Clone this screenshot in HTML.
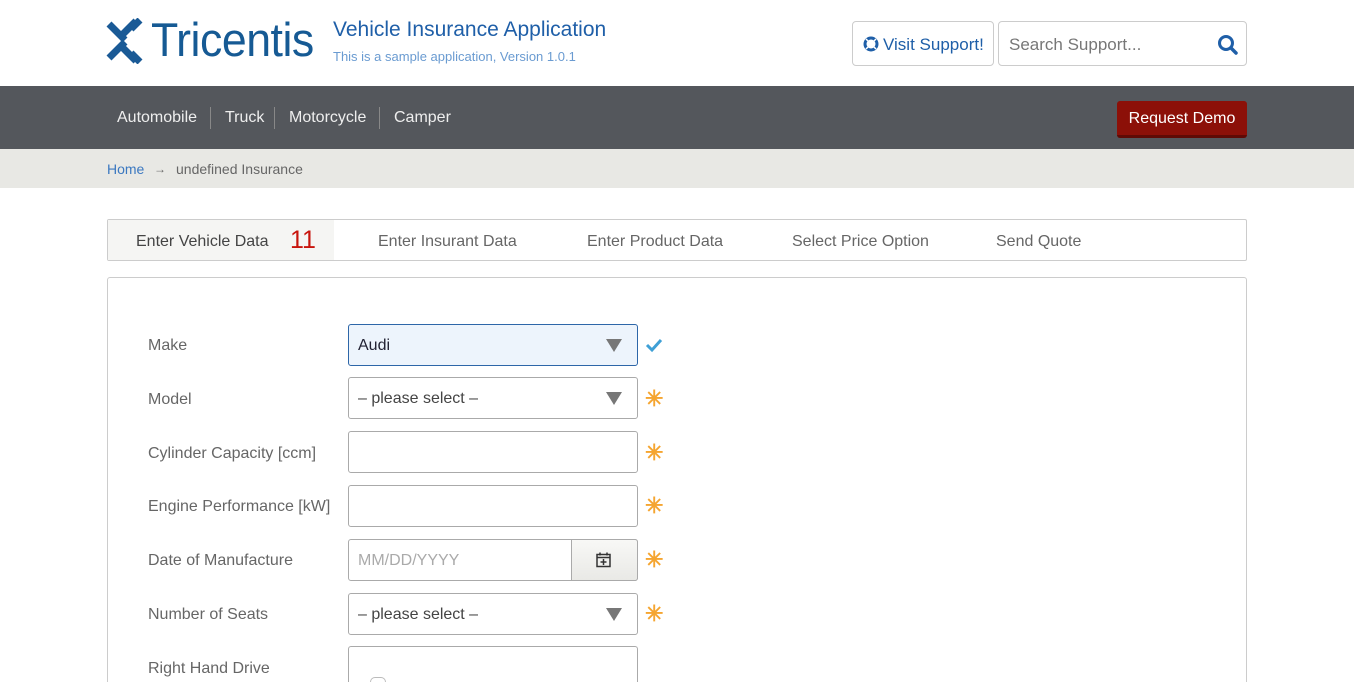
<!DOCTYPE html>
<html><head><meta charset="utf-8"><style>
*{box-sizing:border-box;margin:0;padding:0}
html{width:1366px;height:682px;overflow:hidden}
body{width:1366px;height:682px;overflow:hidden;background:#fff;font-family:"Liberation Sans",sans-serif;color:#555;position:relative}
.abs{position:absolute}
.hdr{left:0;top:0;width:1354px;height:86px;background:#fff}
.nav{left:0;top:86px;width:1354px;height:63px;background:#54575c}
.bc{left:0;top:149px;width:1354px;height:39px;background:#e8e8e4}
.navi{color:#eee;font-size:16px;top:109px}
.sep{top:107px;width:1px;height:22px;background:#888}
.btn{border:1px solid #ccc;border-radius:4px;background:#fff}
.tabs{left:107px;top:219px;width:1140px;height:42px;border:1px solid #ccc;border-radius:2px}
.tab{top:233px;font-size:16px;color:#666}
.form{left:107px;top:277px;width:1140px;height:420px;border:1px solid #ccc;border-radius:3px}
.lbl{left:148px;font-size:16px;color:#666}
.inp{left:348px;width:290px;height:42px;border:1px solid #aaa;border-radius:3px;background:#fff;font-size:16px;color:#444;padding:12px 9px}
.arr{position:absolute;right:15px;top:14px;width:0;height:0;border-left:8px solid transparent;border-right:8px solid transparent;border-top:13px solid #777}
.star{left:645px;font-size:22px;color:#f5a530;font-weight:bold;line-height:1}
</style></head><body>
<div class="abs hdr"></div>
<svg class="abs" style="left:106px;top:18px" width="40" height="46" viewBox="0 0 40 46">
<g stroke="#1a5a96" stroke-width="7" fill="none">
<path d="M3 6 L19 22"/><path d="M3 40 L19 24"/>
<path d="M34 2 L25 11"/><path d="M34 44 L25 35"/>
<path d="M17 30 L30 43" /><path d="M17 16 L30 3"/>
</g></svg>
<div class="abs" style="left:151px;top:12px;font-size:47px;color:#165a94;letter-spacing:-0.5px;transform:scaleX(0.95);transform-origin:left">Tricentis</div>
<div class="abs" style="left:333px;top:18px;font-size:21px;color:#1f5fa8">Vehicle Insurance Application</div>
<div class="abs" style="left:333px;top:49px;font-size:13px;color:#6a9bd1">This is a sample application, Version 1.0.1</div>
<div class="abs btn" style="left:852px;top:21px;width:142px;height:45px"></div>
<svg class="abs" style="left:863px;top:36px" width="16" height="16" viewBox="0 0 16 16"><circle cx="8" cy="8" r="6" fill="none" stroke="#1f5fa8" stroke-width="3"/><circle cx="8" cy="8" r="2.5" fill="#fff"/><path d="M3 3l3 3M13 3l-3 3M3 13l3-3M13 13l-3-3" stroke="#fff" stroke-width="1.5"/></svg>
<div class="abs" style="left:883px;top:35px;font-size:17px;color:#1f5fa8">Visit Support!</div>
<div class="abs btn" style="left:998px;top:21px;width:249px;height:45px"></div>
<div class="abs" style="left:1009px;top:35px;font-size:17px;color:#777">Search Support...</div>
<svg class="abs" style="left:1217px;top:34px" width="22" height="22" viewBox="0 0 22 22"><circle cx="9" cy="9" r="6.5" fill="none" stroke="#1f5fa8" stroke-width="3"/><path d="M14 14l5 5" stroke="#1f5fa8" stroke-width="3.5" stroke-linecap="round"/></svg>
<div class="abs nav"></div>
<div class="abs navi" style="left:117px">Automobile</div>
<div class="abs sep" style="left:210px"></div>
<div class="abs navi" style="left:225px">Truck</div>
<div class="abs sep" style="left:274px"></div>
<div class="abs navi" style="left:289px">Motorcycle</div>
<div class="abs sep" style="left:379px"></div>
<div class="abs navi" style="left:394px">Camper</div>
<div class="abs" style="left:1117px;top:101px;width:130px;height:37px;background:#8c1008;border-radius:3px;border-bottom:3px solid #5f0a05;color:#fff;font-size:16px;text-align:center;line-height:36px">Request Demo</div>
<div class="abs bc"></div>
<div class="abs" style="left:107px;top:161px;font-size:14px;color:#3b78c0">Home</div>
<div class="abs" style="left:154px;top:162px;font-size:12px;color:#666">→</div>
<div class="abs" style="left:176px;top:161px;font-size:14px;color:#666">undefined Insurance</div>
<div class="abs tabs"></div>
<div class="abs" style="left:108px;top:220px;width:226px;height:40px;background:#f5f5f3"></div>
<div class="abs tab" style="left:136px;color:#444">Enter Vehicle Data</div>
<div class="abs" style="left:290px;top:226px;font-size:25px;color:#c8140c">11</div>
<div class="abs tab" style="left:378px">Enter Insurant Data</div>
<div class="abs tab" style="left:587px">Enter Product Data</div>
<div class="abs tab" style="left:792px">Select Price Option</div>
<div class="abs tab" style="left:996px">Send Quote</div>
<div class="abs form"></div>

<div class="abs lbl" style="top:337px">Make</div>
<div class="abs inp" style="top:324px;background:#edf4fc;border-color:#2d66a8;color:#223">Audi<div class="arr"></div></div>
<svg class="abs" style="left:645px;top:337px" width="18" height="16" viewBox="0 0 18 16"><path d="M2 8l5 5L16 3" fill="none" stroke="#3fa0d6" stroke-width="3"/></svg>

<div class="abs lbl" style="top:391px">Model</div>
<div class="abs inp" style="top:377px">– please select –<div class="arr"></div></div>
<div class="abs star" style="top:388px">✳</div>

<div class="abs lbl" style="top:445px">Cylinder Capacity [ccm]</div>
<div class="abs inp" style="top:431px"></div>
<div class="abs star" style="top:442px">✳</div>

<div class="abs lbl" style="top:498px">Engine Performance [kW]</div>
<div class="abs inp" style="top:485px"></div>
<div class="abs star" style="top:495px">✳</div>

<div class="abs lbl" style="top:552px">Date of Manufacture</div>
<div class="abs inp" style="top:539px;color:#aaa">MM/DD/YYYY</div>
<div class="abs" style="left:571px;top:539px;width:67px;height:42px;border:1px solid #aaa;border-radius:0 3px 3px 0;background:linear-gradient(#f8f8f6,#e9e9e6)"></div>
<svg class="abs" style="left:595px;top:551px" width="18" height="18" viewBox="0 0 18 18"><rect x="2" y="3.5" width="13" height="12" fill="none" stroke="#333" stroke-width="1.5"/><path d="M2 6.5h13M5 1.5v3M12 1.5v3M8.5 8v6M5.5 11h6" stroke="#333" stroke-width="1.5"/></svg>
<div class="abs star" style="top:549px">✳</div>

<div class="abs lbl" style="top:606px">Number of Seats</div>
<div class="abs inp" style="top:593px">– please select –<div class="arr"></div></div>
<div class="abs star" style="top:603px">✳</div>

<div class="abs lbl" style="top:660px">Right Hand Drive</div>
<div class="abs inp" style="top:646px;height:36px;border-bottom:none;border-radius:3px 3px 0 0"></div>
<div class="abs" style="left:370px;top:677px;width:16px;height:5px;border:1px solid #bbb;border-bottom:none;border-radius:8px 8px 0 0"></div>
</body></html>
